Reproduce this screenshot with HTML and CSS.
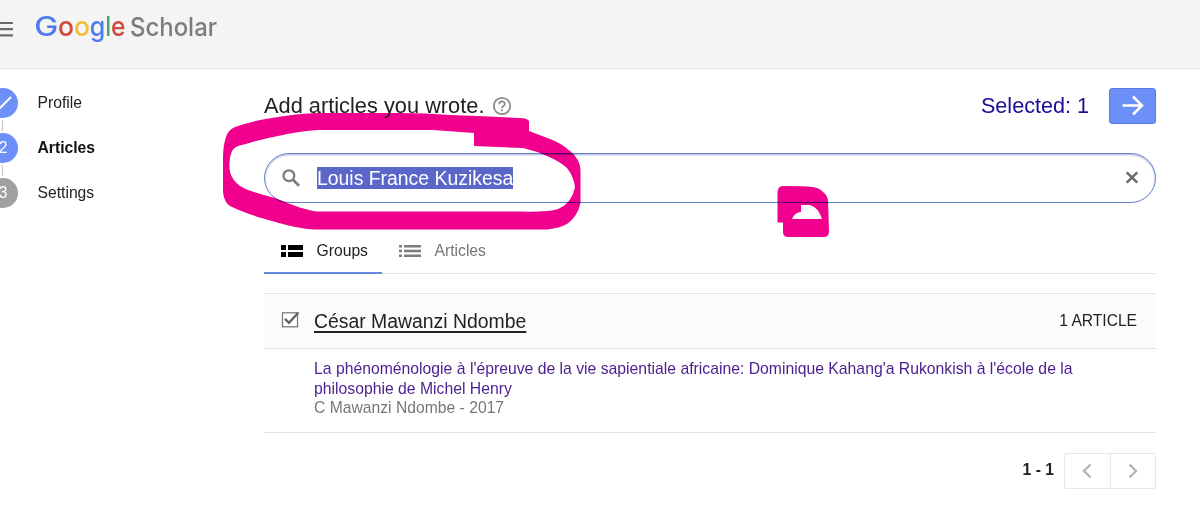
FILE: index.html
```html
<!DOCTYPE html>
<html lang="en">
<head>
<meta charset="utf-8">
<title>Google Scholar</title>
<link rel="stylesheet" href="styles.css">
</head>
<body>
<header class="topbar">
  <svg class="menu" width="13" height="18" viewBox="0 0 13 18"><path d="M0 3H13M0 9.2H13M0 15.4H13" stroke="#6b6b6b" stroke-width="2.2"/></svg>
  <svg class="logo" width="184" height="36" viewBox="0 0 184 36">
    <g class="google">
      <text x="-0.8" y="25.8" fill="#4d7bf0" textLength="24" lengthAdjust="spacingAndGlyphs">G</text>
      <text x="23" y="25.8" fill="#d1493f" textLength="16" lengthAdjust="spacingAndGlyphs">o</text>
      <text x="39" y="25.8" fill="#efbf3d" textLength="16" lengthAdjust="spacingAndGlyphs">o</text>
      <text x="54.7" y="25.8" fill="#4d7bf0" textLength="15.5" lengthAdjust="spacingAndGlyphs">g</text>
      <text x="70.4" y="25.8" fill="#45a35c" textLength="5.5" lengthAdjust="spacingAndGlyphs">l</text>
      <text x="75.9" y="25.8" fill="#d1493f" textLength="14.5" lengthAdjust="spacingAndGlyphs">e</text>
    </g>
    <text class="scholar" x="95" y="26" textLength="87" lengthAdjust="spacingAndGlyphs">Scholar</text>
  </svg>
</header>
<div class="page">
  <nav class="steps">
    <div class="step"><span class="dot"><svg width="30" height="30" viewBox="0 0 30 30"><path d="M8 16L12 20L23 9" fill="none" stroke="#fff" stroke-width="2"/></svg></span><span>Profile</span></div>
    <div class="link"></div>
    <div class="step current"><span class="dot">2</span><span>Articles</span></div>
    <div class="link"></div>
    <div class="step todo"><span class="dot">3</span><span>Settings</span></div>
  </nav>
  <main class="main">
    <div class="title-row">
      <h1 class="title">Add articles you wrote.</h1>
      <svg class="help" width="20" height="20" viewBox="0 0 20 20"><circle cx="10" cy="10" r="8.2" fill="none" stroke="#8a8a8a" stroke-width="1.8"/><path d="M7.2 8.2C7.2 4.4 12.8 4.5 12.8 8C12.8 10 10 10.1 10 12.2" fill="none" stroke="#8a8a8a" stroke-width="1.7"/><path d="M9.1 13.4h1.8v1.8H9.1z" fill="#8a8a8a"/></svg>
      <span class="selected">Selected: 1</span>
      <button class="next"><svg width="24" height="22" viewBox="0 0 24 22"><path d="M1.5 10.5H21M12 1.5L21 10.5L12 19.5" fill="none" stroke="#fff" stroke-width="2.5"/></svg></button>
    </div>
    <div class="search">
      <svg width="20" height="20" viewBox="0 0 20 20"><circle cx="7.9" cy="7.7" r="5.4" fill="none" stroke="#7d7d7d" stroke-width="2.3"/><path d="M11.7 11.5L18 17.7" stroke="#7d7d7d" stroke-width="2.7"/></svg>
      <span class="query">Louis France Kuzikesa</span>
      <svg class="clear" width="14" height="14" viewBox="0 0 14 14"><path d="M1.7 1.4L12.3 11.6M12.3 1.4L1.7 11.6" stroke="#6d6d6d" stroke-width="2.7"/></svg>
    </div>
    <div class="tabs">
      <div class="tab active"><svg width="22" height="14" viewBox="0 0 22 14"><path d="M0 1h5v5H0zM7 1h15v5H7zM0 8h5v5H0zM7 8h15v5H7z" fill="#000"/></svg><span>Groups</span></div>
      <div class="tab"><svg width="22" height="14" viewBox="0 0 22 14"><path d="M0 1h3v2.5H0zM5 1h17v2.5H5zM0 5.8h3v2.5H0zM5 5.8h17v2.5H5zM0 10.6h3v2.5H0zM5 10.6h17v2.5H5z" fill="#7c7c7c"/></svg><span>Articles</span></div>
    </div>
    <section class="group">
      <div class="group-head">
        <svg class="check" width="20" height="18" viewBox="0 0 20 18"><rect x="1.5" y="0.8" width="15" height="14" fill="#fff" stroke="#737373" stroke-width="1.2"/><path d="M4 6.8L8 10.8L17.5 0.5" fill="none" stroke="#666" stroke-width="2.4"/></svg>
        <span class="author">César Mawanzi Ndombe</span>
        <span class="count">1 ARTICLE</span>
      </div>
      <div class="article">
        <div class="article-title">La phénoménologie à l'épreuve de la vie sapientiale africaine: Dominique Kahang'a Rukonkish à l'école de la<br>philosophie de Michel Henry</div>
        <div class="meta">C Mawanzi Ndombe - 2017</div>
      </div>
    </section>
    <div class="pager">
      <span class="range">1 - 1</span>
      <div class="pager-buttons">
        <span class="pager-button"><svg width="10" height="16" viewBox="0 0 10 16"><path d="M8.5 1.5L2 8L8.5 14.5" fill="none" stroke="#b5b5b5" stroke-width="2.4"/></svg></span>
        <span class="pager-button"><svg width="10" height="16" viewBox="0 0 10 16"><path d="M1.5 1.5L8 8L1.5 14.5" fill="none" stroke="#b5b5b5" stroke-width="2.4"/></svg></span>
      </div>
    </div>
  </main>
</div>
<svg class="ink" width="1200" height="527" viewBox="0 0 1200 527">
  <path d="M529 121Q527 118 520 118Q480 116 450 115Q425 113 400 113H315Q295 114 278 117Q250 121 235 127Q228 130 226 137Q223 146 223 158V192Q224 202 230 206Q244 213 265 219Q298 229 315 229.5H547Q560 228 567 224Q578 216 580.5 203V170Q580 159 570 151Q561 143 550 139L529 131Z
           M474 133V146L523 148Q536 151 547 156Q559 161 567 168Q574 177 575 187Q573 197 567 203Q561 210 547 211Q535 212 520 211.5H318Q306 211 275 198Q250 192 240 186Q232 180 230 172Q228 160 232 151Q235 146 242 145Q262 139 278 136Q300 131 318 130H433Z"/>
  <path d="M777.5 222.5V192Q778 186 783 186Q802 186 813 187Q819 188 822 191Q828 196 828 201L829 231Q829 237 824 237H788Q783 237 783 232V222.5Z
           M792 219H822Q818 207 810 205H801V212Q795 212 792 219Z"/>
</svg>
</body>
</html>
```
FILE: styles.css
```css
* { box-sizing: border-box; }
body { margin: 0; height: 527px; overflow: hidden; background: #fff; color: #222; font: 15.7px/19.5px "Liberation Sans", Arial, sans-serif; }
svg { display: block; flex: none; }
.topbar { display: flex; height: 69px; padding-top: 10px; background: #f4f4f4; border-bottom: 1px solid #e2e2e2; }
.menu { margin: 10px 22px 0 0; }
.logo { overflow: visible; }
.google { font: 500 27.5px Inter, sans-serif; }
.scholar { font: 500 25px Inter, sans-serif; fill: #7c7c7c; }
.page { display: flex; }
.steps { width: 264px; margin-left: -12px; padding-top: 19px; flex: none; }
.step { display: flex; align-items: center; gap: 19.5px; height: 30px; }
.dot { display: flex; align-items: center; justify-content: center; width: 30px; height: 30px; border-radius: 50%; background: #6c8ff8; color: #fff; font-weight: 400; }
.current { font-weight: 700; color: #111; }
.todo .dot { background: #a0a0a0; }
.link { width: 1px; height: 11px; margin: 2px 0 2px 14px; background: #c4c4c4; }
.main { width: 892px; margin-left: 12px; padding-top: 19px; }
.title-row { display: flex; align-items: center; height: 36px; }
.title { margin: 0; font-size: 21.75px; font-weight: 400; line-height: 26px; letter-spacing: .02px; }
.help { margin-left: 8px; }
.selected { margin-left: auto; font-size: 21.6px; color: #1a0d96; }
.next { display: flex; align-items: center; justify-content: center; width: 47px; height: 36px; margin-left: 20px; padding: 0; border: 1px solid #587de0; border-radius: 3px; background: #6c8ff8; }
.search { display: flex; align-items: center; height: 50px; margin-top: 29px; padding: 0 16px 0 16px; border: 1px solid #6582cf; border-radius: 25px; box-shadow: inset 0 1px 2px rgba(60,75,150,.45); }
.query { margin-left: 16px; background: #5a67c9; color: #fff; font-size: 19.4px; line-height: 22px; }
.clear { margin-left: auto; }
.tabs { display: flex; height: 46px; margin-top: 25px; border-bottom: 1px solid #e2e2e2; color: #777; }
.tab { display: flex; align-items: center; gap: 14px; height: 46px; padding: 0 15px 0 16.5px; }
.active { width: 118px; border-bottom: 2px solid #6186dc; color: #222; padding-top: 2px; }
.group { margin-top: 19px; border: solid #e2e2e2; border-width: 1px 0; }
.group-head { display: flex; align-items: center; height: 55px; padding: 0 19px 0 17px; background: #fbfbfb; border-bottom: 1px solid #e2e2e2; }
.author { margin-left: 13px; font-size: 19.4px; line-height: 22px; text-decoration: underline; text-decoration-thickness: 1.5px; text-underline-offset: 3px; }
.count { margin-left: auto; font-size: 15.6px; }
.article { height: 83px; padding: 10px 0 0 50px; }
.article-title { color: #4b1f8f; font-size: 15.75px; }
.meta { color: #777; }
.pager { display: flex; justify-content: flex-end; margin-top: 20px; height: 36px; }
.range { margin: 7px 10px 0 0; font-weight: 700; }
.pager-buttons { display: flex; width: 92px; border: 1px solid #e8e8e8; border-radius: 2px; }
.pager-button { display: flex; flex: 1; align-items: center; justify-content: center; }
.pager-button + .pager-button { border-left: 1px solid #e8e8e8; }
.ink { position: absolute; top: 0; left: 0; fill: #f0008c; fill-rule: evenodd; mix-blend-mode: multiply; pointer-events: none; }
```
